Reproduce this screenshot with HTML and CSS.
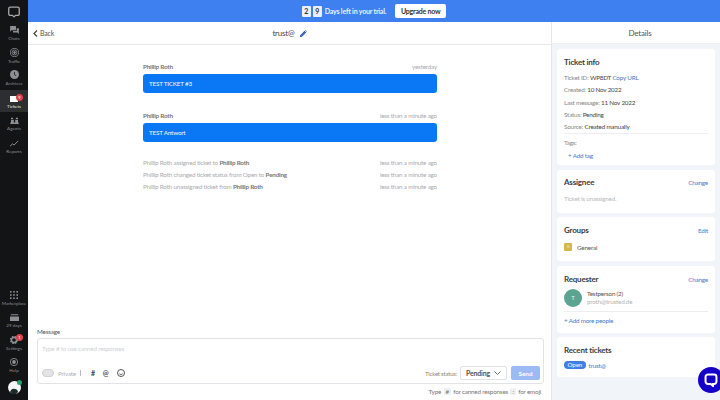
FILE: index.html
```html
<!DOCTYPE html>
<html lang="en">
<head>
<meta charset="utf-8">
<title>Ticket</title>
<link rel="stylesheet" href="styles.css">
</head>
<body>
<div class="app">
  <nav class="sidebar">
    <div class="nav-group">
      <div class="logo"><svg width="12" height="12" viewBox="0 0 16 16"><path d="M3 1.500h10a2 2 0 0 1 2 2v7a2 2 0 0 1-2 2h-3l-2 2-2-2H3a2 2 0 0 1-2-2v-7a2 2 0 0 1 2-2z" fill="none" stroke="#a4a7ab" stroke-width="1.800"/></svg></div>
      <div class="nav-item"><svg width="9" height="8" viewBox="0 0 12 11"><path d="M0 0h8v6H2L0 8zM9 3h3v8l-2-2H4V7h5z" fill="#8c8f93"/></svg><span>Chats</span></div>
      <div class="nav-item"><svg width="9" height="9" viewBox="0 0 11 11" fill="none" stroke="#8c8f93"><circle cx="5.500" cy="5.500" r="5"/><circle cx="5.500" cy="5.500" r="3"/><circle cx="5.500" cy="5.500" r="1.200" fill="#8c8f93"/></svg><span>Traffic</span></div>
      <div class="nav-item"><svg width="9" height="9" viewBox="0 0 11 11"><circle cx="5.500" cy="5.500" r="5.500" fill="#8c8f93"/><path d="M5.500 2.500v3.200l2 1.300" fill="none" stroke="#17181a"/></svg><span>Archives</span></div>
      <div class="nav-item active"><div class="ticket-icon"><svg width="8" height="6" viewBox="0 0 8 6"><rect width="8" height="6" fill="#fff"/></svg><b class="badge">9</b></div><span>Tickets</span></div>
      <div class="nav-item"><svg width="9" height="7" viewBox="0 0 12 10"><path d="M1 1h3v2H1zM8 1h3v2H8zM1 4h4v4H1zM7 4h4v4H7zM0 8h12v2H0z" fill="#8c8f93"/></svg><span>Agents</span></div>
      <div class="nav-item"><svg width="9" height="7" viewBox="0 0 12 9"><path d="M0 8l3.500-3 2 1.500L11 1" fill="none" stroke="#8c8f93" stroke-width="1.300"/></svg><span>Reports</span></div>
    </div>
    <div class="nav-group">
      <div class="nav-item"><svg width="8" height="8" viewBox="0 0 10 10" fill="#8c8f93"><rect width="2" height="2"/><rect x="4" width="2" height="2"/><rect x="8" width="2" height="2"/><rect y="4" width="2" height="2"/><rect x="4" y="4" width="2" height="2"/><rect x="8" y="4" width="2" height="2"/><rect y="8" width="2" height="2"/><rect x="4" y="8" width="2" height="2"/><rect x="8" y="8" width="2" height="2"/></svg><span>Marketplace</span></div>
      <div class="nav-item"><svg width="9" height="7" viewBox="0 0 12 9"><path d="M1 0h10v1.500H1zM0 3h12v6H0z" fill="#8c8f93"/></svg><span>29 days</span></div>
      <div class="nav-item"><div class="ticket-icon"><svg width="8" height="8" viewBox="0 0 11 11"><circle cx="5.500" cy="5.500" r="3.600" fill="none" stroke="#8c8f93" stroke-width="2.200"/><circle cx="5.500" cy="5.500" r="5" fill="none" stroke="#8c8f93" stroke-width="1.400" stroke-dasharray="2 2"/></svg><b class="badge">1</b></div><span>Settings</span></div>
      <div class="nav-item"><svg width="8" height="8" viewBox="0 0 11 11"><circle cx="5.500" cy="5.500" r="5" fill="none" stroke="#8c8f93" stroke-width="1.200"/><circle cx="5.500" cy="5.500" r="2.600" fill="#8c8f93"/></svg><span>Help</span></div>
      <div class="avatar-me"><svg width="13" height="13" viewBox="0 0 13 13"><circle cx="6.500" cy="6.500" r="6.500" fill="#f3f5f6"/><path d="M2 11c1-3 3-4 5-3 2 0 3 2 3 3l-2 2H4z" fill="#1c2b2b"/></svg><i class="online"></i></div>
    </div>
  </nav>
  <div class="content">
    <header class="trial">
      <b class="digit">2</b><b class="digit">9</b><span class="trial-text">Days left in your trial.</span>
      <button class="upgrade">Upgrade now</button>
    </header>
    <div class="columns">
      <main class="ticket">
        <div class="ticket-head">
          <a class="back"><svg width="5" height="7" viewBox="0 0 5 7"><path d="M4 .5L1 3.500l3 3" fill="none" stroke="#444" stroke-width="1.200"/></svg>Back</a>
          <div class="title">trust@ <svg width="7" height="7" viewBox="0 0 7 7"><path d="M0 7V5.400L4.600.8l1.600 1.600L1.600 7zM5.100.3l.5-.3 1.400 1.400-.3.5z" fill="#3d62b5"/></svg></div>
        </div>
        <div class="thread">
          <div class="message">
            <div class="meta"><b>Phillip Roth</b><span>yesterday</span></div>
            <div class="bubble">TEST TICKET #3</div>
          </div>
          <div class="message">
            <div class="meta"><b>Phillip Roth</b><span>less than a minute ago</span></div>
            <div class="bubble">TEST Antwort</div>
          </div>
          <div class="logs">
            <div class="log"><p>Phillip Roth assigned ticket to <b>Phillip Roth</b></p><span>less than a minute ago</span></div>
            <div class="log"><p>Phillip Roth changed ticket status from Open to <b>Pending</b></p><span>less than a minute ago</span></div>
            <div class="log"><p>Phillip Roth unassigned ticket from <b>Phillip Roth</b></p><span>less than a minute ago</span></div>
          </div>
        </div>
        <section class="composer">
          <label class="composer-label">Message</label>
          <div class="composer-box">
            <div class="placeholder">Type # to use canned responses</div>
            <div class="composer-tools">
              <div class="tools-left">
                <i class="toggle"></i><span class="private">Private</span><i class="sep"></i>
                <span class="tool">#</span>
                <span class="tool">@</span>
                <svg width="8" height="8" viewBox="0 0 8 8" fill="none" stroke="#555"><circle cx="4" cy="4" r="3.500"/><path d="M2.400 4.800c.8.9 2.400.9 3.200 0M2.700 3h.1M5.200 3h.1"/></svg>
              </div>
              <div class="tools-right">
                <span class="status-label">Ticket status:</span>
                <div class="select">Pending <svg width="7" height="4" viewBox="0 0 7 4"><path d="M.5.5l3 3 3-3" fill="none" stroke="#777"/></svg></div>
                <button class="send">Send</button>
              </div>
            </div>
          </div>
          <div class="hint">Type <kbd>#</kbd> for canned responses <kbd>:</kbd> for emoji</div>
        </section>
      </main>
      <aside class="details">
        <div class="details-head">Details</div>
        <div class="cards">
          <section class="card card-info">
            <h3>Ticket info</h3>
            <p>Ticket ID: <em>WP8DT</em> <a>Copy URL</a></p>
            <p>Created: <em>10 Nov 2022</em></p>
            <p>Last message: <em>11 Nov 2022</em></p>
            <p>Status: <em>Pending</em></p>
            <p class="rule">Source: <em>Created manually</em></p>
            <p>Tags:</p>
            <a class="add-tag">+ Add tag</a>
          </section>
          <section class="card card-assignee">
            <div class="card-head"><h3>Assignee</h3><a>Change</a></div>
            <p class="muted">Ticket is unassigned.</p>
          </section>
          <section class="card card-groups">
            <div class="card-head"><h3>Groups</h3><a>Edit</a></div>
            <div class="group"><i class="group-icon">G</i><span>General</span></div>
          </section>
          <section class="card card-requester">
            <div class="card-head"><h3>Requester</h3><a>Change</a></div>
            <div class="person"><i class="person-icon">T</i><div><div class="person-name">Testperson (2)</div><div class="person-mail">proth@trusted.de</div></div></div>
            <a class="add-people">+ Add more people</a>
          </section>
          <section class="card card-recent">
            <h3>Recent tickets</h3>
            <div class="recent"><b class="pill">Open</b><a>trust@</a></div>
          </section>
        </div>
      </aside>
    </div>
  </div>
</div>
<div class="chat-widget"><svg width="14" height="14" viewBox="0 0 18 18"><path d="M5 2h8a3 3 0 0 1 3 3v6a3 3 0 0 1-3 3h-1.500v2.500L8.500 14H5a3 3 0 0 1-3-3V5a3 3 0 0 1 3-3z" fill="none" stroke="#fff" stroke-width="2.600"/></svg></div>
</body>
</html>
```
FILE: styles.css
```css
* { box-sizing: border-box; }
html, body { margin: 0; height: 400px; overflow: hidden; }
body { font-family: Lato, "Noto Sans", sans-serif; font-size: 6.300px; letter-spacing: -0.2px; color: #444; background: #fff; }
p { margin: 0; }
em { font-style: normal; color: #444; }
i { display: block; font-style: normal; }
a { color: #4a78c9; }

.app { display: flex; height: 400px; }
.sidebar { width: 28px; flex: none; background: #131416; display: flex; flex-direction: column; justify-content: space-between; }
.nav-group { display: flex; flex-direction: column; }
.logo { height: 22px; display: flex; align-items: center; justify-content: center; padding-top: 2px; }
.nav-item { height: 22.500px; display: flex; flex-direction: column; align-items: center; justify-content: flex-end; gap: 2px; padding-bottom: 2.500px; color: #8d9094; font-size: 4.500px; letter-spacing: 0; line-height: 6px; white-space: nowrap; }
.nav-item.active { background: #2d2e31; color: #e6e6e6; }
.ticket-icon { position: relative; display: flex; }
.badge { position: absolute; left: 6px; top: -2px; width: 7px; height: 7px; border-radius: 50%; background: #d9434a; color: #fff; font-size: 4px; line-height: 7px; text-align: center; font-weight: 400; }
.avatar-me { position: relative; width: 13px; height: 13px; margin: 4.500px auto 6px; }
.online { position: absolute; right: -1px; top: -1px; width: 5px; height: 5px; border-radius: 50%; background: #2e9d6e; }

.content { flex: 1; display: flex; flex-direction: column; min-width: 0; }
.trial { height: 22px; background: #3f80f0; display: flex; align-items: center; justify-content: center; gap: 1px; }
.digit { width: 9px; height: 11px; background: #e9f0fc; color: #333; text-align: center; font-size: 7px; line-height: 11px; margin-right: 1px; border-radius: 1px; }
.trial-text { color: #e8f0ff; font-weight: 700; font-size: 7px; margin: 0 8px 0 1px; }
.upgrade { width: 51px; height: 14px; border: 0; padding: 0; border-radius: 2px; background: #fff; color: #333; font: 700 7px Lato, sans-serif; letter-spacing: -0.2px; }

.columns { flex: 1; display: flex; min-height: 0; }
.ticket { flex: 1; display: flex; flex-direction: column; min-width: 0; border-right: 1px solid #e5e7ea; }
.ticket-head { height: 23px; flex: none; border-bottom: 1px solid #e6e8ea; display: flex; align-items: center; position: relative; justify-content: center; }
.back { position: absolute; left: 5px; display: flex; align-items: center; gap: 2px; color: #555; font-size: 7px; }
.title { font-size: 8px; color: #444; display: flex; align-items: center; gap: 5px; }
.thread { flex: 1; width: 294px; margin: 0 auto 0 115px; padding-top: 17px; }
.message + .message { margin-top: 18px; }
.meta { display: flex; justify-content: space-between; height: 9px; line-height: 9px; margin-bottom: 3px; color: #a9abae; }
.meta b { font-weight: 700; color: #777; }
.bubble { height: 19px; background: #0a78f5; color: #e9f3ff; border-radius: 3px; padding-left: 6px; line-height: 19px; font-weight: 500; }
.logs { margin-top: 15px; }
.log { display: flex; justify-content: space-between; height: 12px; line-height: 12px; color: #aaacae; }
.log b { color: #777; font-weight: 700; }

.composer { flex: none; padding: 0 7px 4px 9px; }
.composer-label { display: block; line-height: 9px; color: #555; margin-bottom: 2px; }
.composer-box { height: 46px; border: 1px solid #e1e3e6; border-radius: 3px; padding: 5px 3px 3px 4px; display: flex; flex-direction: column; justify-content: space-between; }
.placeholder { color: #cfd2d6; line-height: 9px; }
.composer-tools { display: flex; justify-content: space-between; align-items: center; }
.tools-left { display: flex; align-items: center; gap: 4px; }
.toggle { width: 12px; height: 8px; border-radius: 4px; background: #e2e4e6; border: 1px solid #cfd1d4; }
.private { color: #b0b2b5; }
.sep { width: 1px; height: 6px; background: #bbb; margin-right: 6px; }
.tool { color: #444; font-size: 7px; font-weight: 700; line-height: 9px; margin-right: 4px; }
.tools-right { display: flex; align-items: center; gap: 3px; }
.status-label { color: #888; font-size: 6px; }
.select { width: 47px; height: 14px; border: 1px solid #dfe1e4; border-radius: 2px; display: flex; align-items: center; justify-content: center; gap: 4px; font-weight: 700; font-size: 7px; color: #555; }
.send { width: 29px; height: 14px; margin-left: 1px; border: 0; padding: 0; border-radius: 2px; background: #9cbaf3; color: #fff; font: 700 6.300px Lato, sans-serif; }
.hint { text-align: right; line-height: 9px; color: #777; margin-top: 3px; padding-right: 3px; }
kbd { font: inherit; background: #eef0f2; padding: 0 2px; border-radius: 1px; margin: 0 1px; }

.details { width: 168px; flex: none; background: #f1f4f8; display: flex; flex-direction: column; }
.details-head { height: 22px; background: #fff; text-align: center; line-height: 22px; font-size: 8px; color: #555; border-bottom: 1px solid #eef0f3; padding-left: 8px; }
.cards { display: flex; flex-direction: column; gap: 4.500px; padding: 5px 5px 0; }
.card { background: #fff; border-radius: 3px; padding: 8px 7px; }
.card h3 { margin: 0; font-size: 8px; line-height: 11px; font-weight: 700; color: #3a3d40; }
.card-head { display: flex; justify-content: space-between; align-items: center; }
.card-info { height: 116px; }
.card-info h3 { margin-bottom: 4px; }
.card-info p { height: 12.300px; line-height: 12px; color: #888; }
.rule { border-bottom: 1px solid #eceef0; height: 13px !important; margin-bottom: 3px; }
.add-tag { display: block; margin: 2px 0 0 4px; line-height: 9px; }
.card-assignee { height: 43px; padding-top: 7px; }
.muted { color: #b7b9bc; margin-top: 6px; line-height: 9px; }
.card-groups { height: 44px; }
.group { display: flex; align-items: center; gap: 5px; margin-top: 7px; color: #555; }
.group-icon { width: 8px; height: 8px; border-radius: 1px; background: #d5b64d; color: #f7eec9; font-size: 4px; line-height: 8px; text-align: center; }
.card-requester { height: 67px; }
.person { display: flex; align-items: center; gap: 5px; margin-top: 4px; padding-bottom: 4px; border-bottom: 1px solid #eceef0; }
.person-icon { width: 18px; height: 18px; border-radius: 50%; background: #5aa491; color: #e4f3ef; line-height: 18px; text-align: center; font-size: 6px; }
.person-name { line-height: 9px; color: #555; }
.person-mail { line-height: 8px; color: #b3b5b8; }
.add-people { display: block; margin-top: 4px; line-height: 9px; }
.card-recent { height: 40px; }
.recent { display: flex; align-items: center; gap: 3px; margin-top: 5px; }
.pill { background: #3d7fe6; color: #e6efff; border-radius: 4px; padding: 0 3.500px; font-weight: 500; line-height: 8px; }
.chat-widget { position: absolute; left: 698px; top: 367px; width: 26px; height: 26px; border-radius: 50%; background: #1500c7; display: flex; align-items: center; justify-content: center; }
```
